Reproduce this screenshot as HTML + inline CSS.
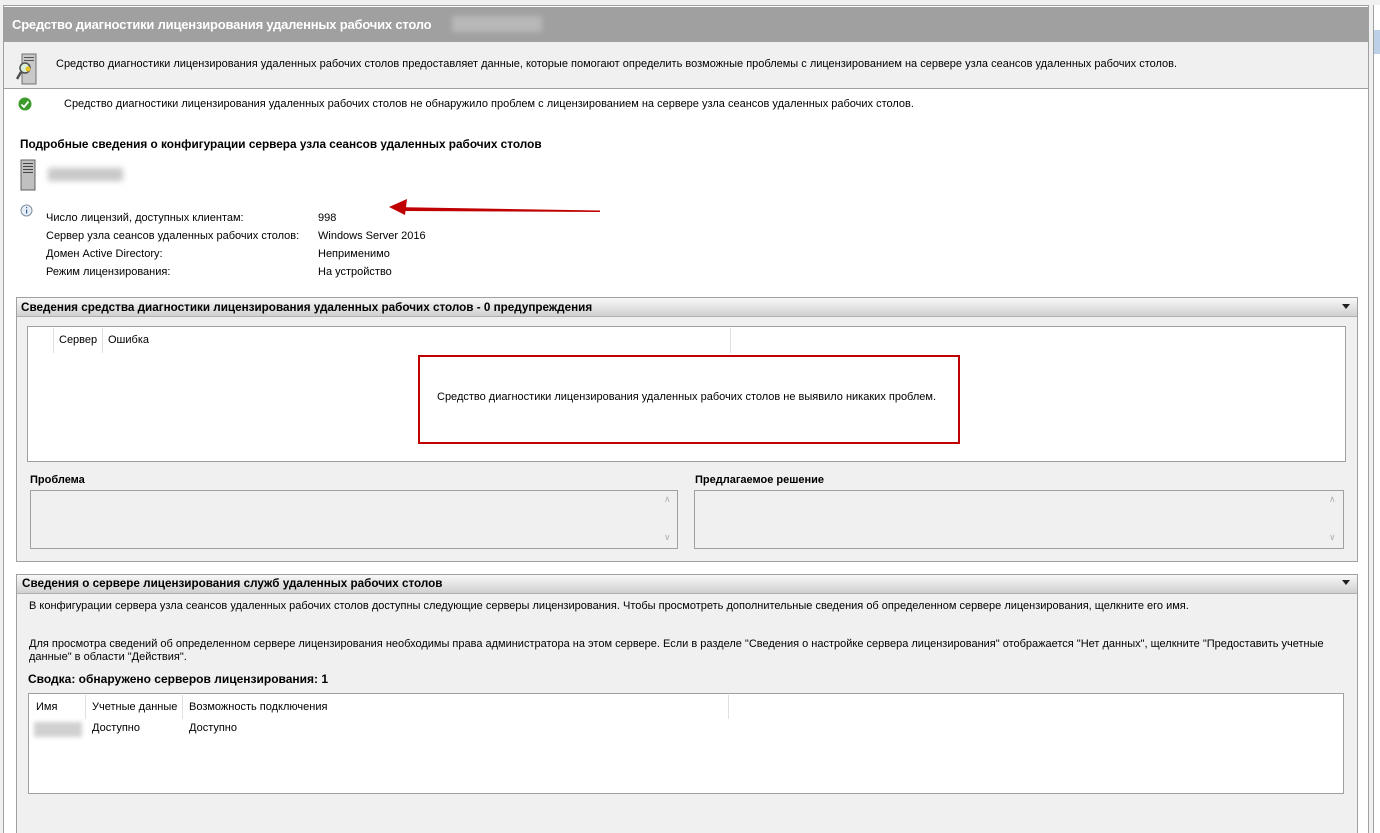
<!DOCTYPE html>
<html><head><meta charset="utf-8"><style>
*{box-sizing:border-box;margin:0;padding:0}
html,body{width:1380px;height:833px;overflow:hidden}
body{background:#f0f0f0;font-family:"Liberation Sans",sans-serif;font-size:11px;color:#000;position:relative}
.a{position:absolute;white-space:nowrap}
.b{font-weight:bold}
</style></head><body>
<div class="a" style="left:3px;top:5px;width:1366px;height:828px;background:#fff;border-left:1px solid #a0a0a0;border-top:1px solid #a0a0a0;border-right:1px solid #a0a0a0"></div>
<div class="a" style="left:1373px;top:5px;width:7px;height:828px;background:#fff;border-left:1px solid #a0a0a0"></div>
<div class="a" style="left:1374px;top:30px;width:6px;height:24px;background:#bcd0e8"></div>
<div class="a" style="left:4px;top:7px;width:1364px;height:35px;background:#a0a0a0"></div>
<div class="a b" style="left:12px;top:17px;color:#fff;font-size:13px;letter-spacing:-0.2px">Средство диагностики лицензирования удаленных рабочих столо</div>
<div class="a" style="left:452px;top:16px;width:90px;height:16px;background:#b8b8b8;filter:blur(3px)"></div>
<div class="a" style="left:4px;top:42px;width:1364px;height:47px;background:#f0f0f0;border-bottom:1px solid #a0a0a0"></div>
<svg class="a" style="left:16px;top:52px" width="28" height="33" viewBox="0 0 28 33"><rect x="6" y="2" width="14" height="30" fill="#c8c8c8" stroke="#707070"/><rect x="8" y="5" width="10" height="1" fill="#555"/><rect x="8" y="8" width="10" height="1" fill="#555"/><circle cx="9" cy="16" r="5" fill="#d8f0d8" stroke="#505050" stroke-width="1.5"/><line x1="5" y1="20" x2="1" y2="27" stroke="#505050" stroke-width="2.5"/><circle cx="12" cy="17" r="2.5" fill="#e8c020"/></svg>
<div class="a" style="left:56px;top:58px">Средство диагностики лицензирования удаленных рабочих столов предоставляет данные, которые помогают определить возможные проблемы с лицензированием на сервере узла сеансов удаленных рабочих столов.</div>
<svg class="a" style="left:18px;top:97px" width="14" height="14"><circle cx="7" cy="7" r="6.5" fill="#3a9a2a"/><path d="M3.5 7.5l2.5 2.5 4.5-5.5" stroke="#fff" stroke-width="1.8" fill="none"/></svg>
<div class="a" style="left:64px;top:98px">Средство диагностики лицензирования удаленных рабочих столов не обнаружило проблем с лицензированием на сервере узла сеансов удаленных рабочих столов.</div>
<div class="a b" style="left:20px;top:137px;font-size:11.8px">Подробные сведения о конфигурации сервера узла сеансов удаленных рабочих столов</div>
<svg class="a" style="left:19px;top:159px" width="18" height="32"><rect x="2" y="1" width="14" height="30" fill="#c0c0c0" stroke="#606060"/><rect x="4" y="4" width="10" height="1" fill="#444"/><rect x="4" y="7" width="10" height="1" fill="#444"/><rect x="4" y="10" width="10" height="1" fill="#444"/><rect x="4" y="13" width="10" height="1" fill="#444"/></svg>
<div class="a" style="left:48px;top:168px;width:75px;height:13px;background:#c8c8c8;filter:blur(3px)"></div>
<svg class="a" style="left:20px;top:204px" width="13" height="13"><circle cx="6.5" cy="6.5" r="5.5" fill="#e8eef5" stroke="#8090a0"/><rect x="6" y="3" width="1.2" height="1.2" fill="#3060a0"/><rect x="6" y="5.5" width="1.2" height="4" fill="#3060a0"/></svg>
<div class="a" style="left:46px;top:209px;line-height:18px">Число лицензий, доступных клиентам:<br>Сервер узла сеансов удаленных рабочих столов:<br>Домен Active Directory:<br>Режим лицензирования:</div>
<div class="a" style="left:318px;top:209px;line-height:18px">998<br>Windows Server 2016<br>Неприменимо<br>На устройство</div>
<svg class="a" style="left:385px;top:198px" width="220" height="20"><path d="M6 9 L215 12.5 L215 14 L20 13 Z" fill="#c00000"/><path d="M4 9 L22 1 L20 17 Z" fill="#c00000"/></svg>

<div class="a" style="left:16px;top:297px;width:1342px;height:265px;background:#f0f0f0;border:1px solid #a0a0a0"></div>
<div class="a" style="left:17px;top:298px;width:1340px;height:19px;background:linear-gradient(#f8f8f8,#d0d0d0);border-bottom:1px solid #b0b0b0"></div>
<div class="a b" style="left:21px;top:301px;font-size:11.7px">Сведения средства диагностики лицензирования удаленных рабочих столов - 0 предупреждения</div>
<div class="a" style="left:1342px;top:304px;border:4px solid transparent;border-top:5px solid #202020"></div>
<div class="a" style="left:27px;top:326px;width:1319px;height:136px;background:#fff;border:1px solid #a0a0a0"></div>
<div class="a" style="left:53px;top:328px;width:1px;height:25px;background:#e0e0e0"></div>
<div class="a" style="left:102px;top:328px;width:1px;height:25px;background:#e0e0e0"></div>
<div class="a" style="left:730px;top:328px;width:1px;height:25px;background:#e0e0e0"></div>
<div class="a" style="left:59px;top:334px">Сервер</div>
<div class="a" style="left:108px;top:334px">Ошибка</div>
<div class="a" style="left:418px;top:355px;width:542px;height:89px;border:2px solid #c00000;background:#fff"></div>
<div class="a" style="left:437px;top:391px">Средство диагностики лицензирования удаленных рабочих столов не выявило никаких проблем.</div>
<div class="a b" style="left:30px;top:474px">Проблема</div>
<div class="a b" style="left:695px;top:474px">Предлагаемое решение</div>
<div class="a" style="left:30px;top:490px;width:648px;height:59px;border:1px solid #a0a0a0;background:#f0f0f0"></div>
<div class="a" style="left:694px;top:490px;width:650px;height:59px;border:1px solid #a0a0a0;background:#f0f0f0"></div>
<div class="a" style="left:664px;top:494px;color:#b0b0b0;font-size:9px">∧</div>
<div class="a" style="left:664px;top:532px;color:#b0b0b0;font-size:9px">∨</div>
<div class="a" style="left:1329px;top:494px;color:#b0b0b0;font-size:9px">∧</div>
<div class="a" style="left:1329px;top:532px;color:#b0b0b0;font-size:9px">∨</div>

<div class="a" style="left:16px;top:574px;width:1342px;height:270px;background:#f0f0f0;border:1px solid #a0a0a0"></div>
<div class="a" style="left:17px;top:575px;width:1340px;height:19px;background:linear-gradient(#f8f8f8,#d0d0d0);border-bottom:1px solid #b0b0b0"></div>
<div class="a b" style="left:22px;top:577px;font-size:11.7px">Сведения о сервере лицензирования служб удаленных рабочих столов</div>
<div class="a" style="left:1342px;top:580px;border:4px solid transparent;border-top:5px solid #202020"></div>
<div class="a" style="left:29px;top:600px">В конфигурации сервера узла сеансов удаленных рабочих столов доступны следующие серверы лицензирования. Чтобы просмотреть дополнительные сведения об определенном сервере лицензирования, щелкните его имя.</div>
<div class="a" style="left:29px;top:638px;line-height:13px">Для просмотра сведений об определенном сервере лицензирования необходимы права администратора на этом сервере. Если в разделе "Сведения о настройке сервера лицензирования" отображается "Нет данных", щелкните "Предоставить учетные<br>данные" в области "Действия".</div>
<div class="a b" style="left:28px;top:672px;font-size:12px">Сводка: обнаружено серверов лицензирования: 1</div>
<div class="a" style="left:28px;top:693px;width:1316px;height:101px;background:#fff;border:1px solid #a0a0a0"></div>
<div class="a" style="left:85px;top:695px;width:1px;height:24px;background:#e0e0e0"></div>
<div class="a" style="left:182px;top:695px;width:1px;height:24px;background:#e0e0e0"></div>
<div class="a" style="left:728px;top:695px;width:1px;height:24px;background:#e0e0e0"></div>
<div class="a" style="left:36px;top:701px">Имя</div>
<div class="a" style="left:92px;top:701px">Учетные данные</div>
<div class="a" style="left:189px;top:701px">Возможность подключения</div>
<div class="a" style="left:34px;top:722px;width:48px;height:15px;background:#d0d0d0;filter:blur(2px)"></div>
<div class="a" style="left:92px;top:722px">Доступно</div>
<div class="a" style="left:189px;top:722px">Доступно</div>
</body></html>
